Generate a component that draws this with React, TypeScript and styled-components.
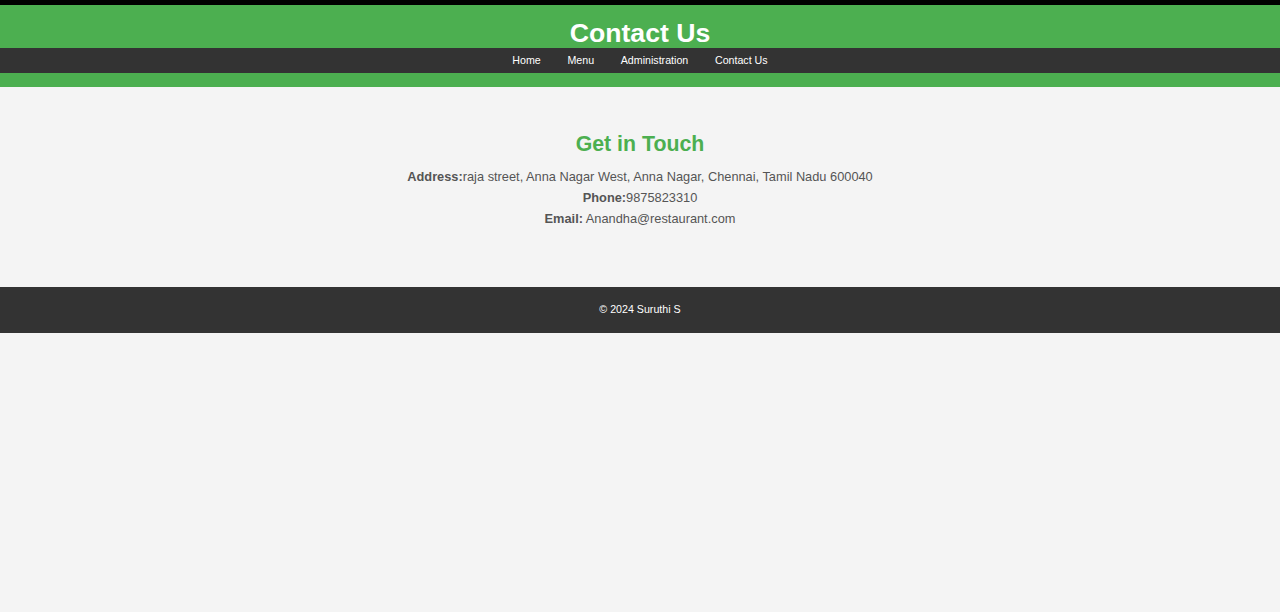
import React from "react";
import styled, { createGlobalStyle } from "styled-components";

const GlobalStyle = createGlobalStyle`
  html, body {
    margin: 0;
    padding: 0;
    background: #f4f4f4;
    font-family: "Liberation Sans", Arial, sans-serif;
  }
  body {
    min-height: 612px;
  }
`;

const Header = styled.header`
  background: #4caf50;
  border-top: 5px solid #000;
  padding: 13px 0 14px;
  text-align: center;
`;

const Title = styled.h1`
  margin: 0;
  color: #fff;
  font-size: 26.67px;
  line-height: 30px;
  font-weight: bold;
`;

const Nav = styled.nav`
  background: #333;
  height: 25px;
  box-sizing: border-box;
  padding-bottom: 2px;
  display: flex;
  justify-content: center;
  align-items: center;
`;

const NavLink = styled.a`
  color: #fff;
  text-decoration: none;
  font-size: 10.67px;
  margin: 0 13.33px;
`;

const Main = styled.main`
  padding: 44px 20px 58px;
  text-align: center;
`;

const Heading = styled.h2`
  margin: 0 0 9px;
  color: #4caf50;
  font-size: 21.33px;
  line-height: 26px;
  font-weight: bold;
`;

const Line = styled.p`
  margin: 0;
  color: #555;
  font-size: 12.8px;
  line-height: 21px;
`;

const Label = styled.strong`
  font-weight: bold;
`;

const Footer = styled.footer`
  background: #333;
  height: 46px;
  box-sizing: border-box;
  padding-bottom: 2px;
  display: flex;
  justify-content: center;
  align-items: center;
  color: #fff;
  font-size: 10.67px;
`;

export default function App() {
  return (
    <>
      <GlobalStyle />
      <Header>
        <Title>Contact Us</Title>
        <Nav>
          <NavLink href="#">Home</NavLink>
          <NavLink href="#">Menu</NavLink>
          <NavLink href="#">Administration</NavLink>
          <NavLink href="#">Contact Us</NavLink>
        </Nav>
      </Header>
      <Main>
        <Heading>Get in Touch</Heading>
        <Line>
          <Label>Address:</Label>raja street, Anna Nagar West, Anna Nagar, Chennai, Tamil Nadu 600040
        </Line>
        <Line>
          <Label>Phone:</Label>9875823310
        </Line>
        <Line>
          <Label>Email:</Label> Anandha@restaurant.com
        </Line>
      </Main>
      <Footer>© 2024 Suruthi S</Footer>
    </>
  );
}
